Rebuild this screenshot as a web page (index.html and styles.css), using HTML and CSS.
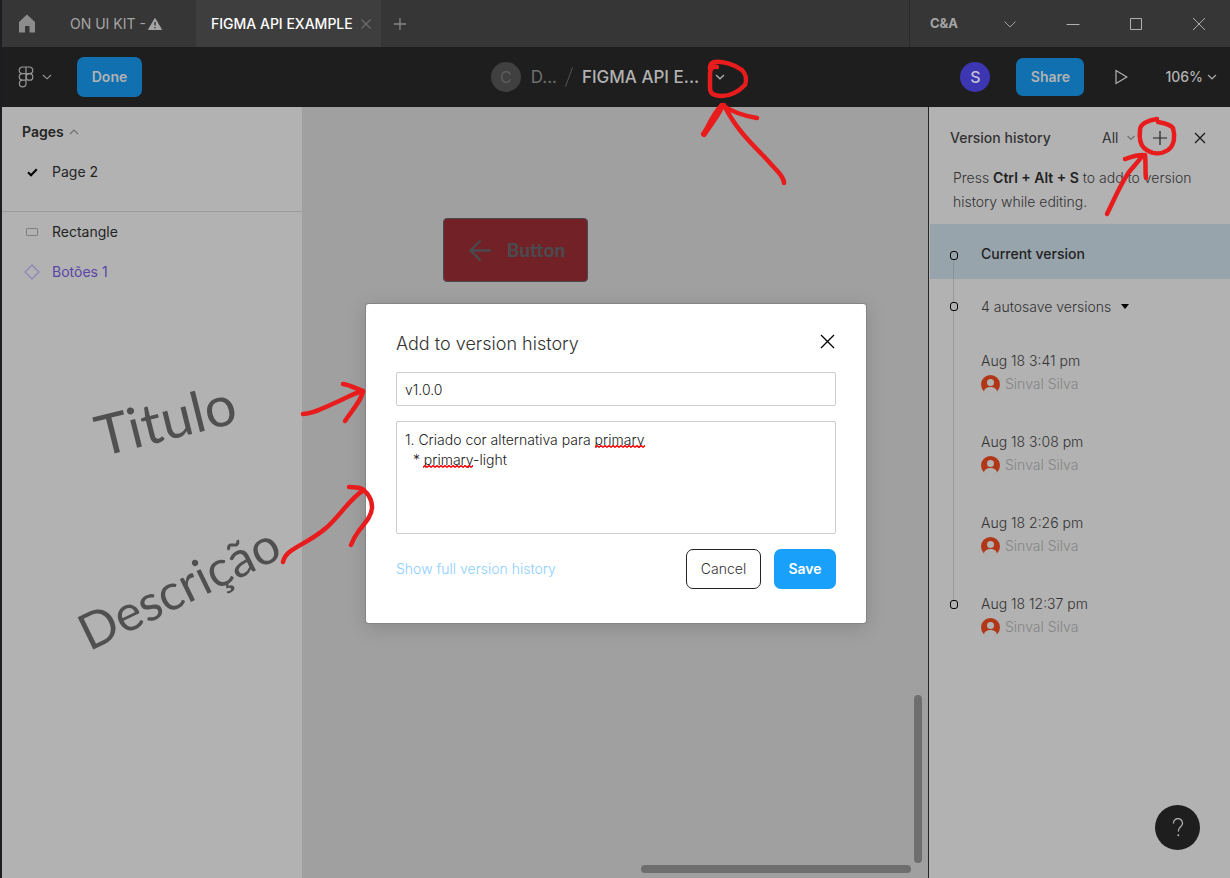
FILE: index.html
```html
<!DOCTYPE html>
<html lang="en">
<head>
<meta charset="utf-8">
<title>FIGMA API EXAMPLE</title>
<link rel="stylesheet" href="styles.css">
</head>
<body>
<div class="app">
  <header class="titlebar">
    <button class="home" aria-label="Home"><svg width="18" height="19" viewBox="0 0 18 19"><path d="M9 0.500 17 8v10.500h-5.500V12h-4.500v6.500H1V8z" fill="#8c8c8c"/></svg></button>
    <button class="tab">ON UI KIT - <svg width="14" height="12" viewBox="0 0 14 12"><path d="M7 0.500 13.500 11.500H0.500z" fill="#a5a5a5" stroke="#a5a5a5" stroke-linejoin="round"/><path d="M7 4v3.500M7 9v1.300" stroke="#363636" stroke-width="1.400"/></svg></button>
    <div class="tab-active"><button class="tab-label">FIGMA API EXAMPLE</button><button class="tab-close" aria-label="Close tab"><svg width="10" height="10" viewBox="0 0 10 10"><path d="M0.500 0.500l9 9M9.500 0.500l-9 9" stroke="#6c6c6c" stroke-width="1.200"/></svg></button></div>
    <button class="tab-add" aria-label="New tab"><svg width="12" height="12" viewBox="0 0 12 12"><path d="M6 0v12M0 6h12" stroke="#858585" stroke-width="1.300"/></svg></button>
    <div class="window-bar">
      <span class="org">C&amp;A</span>
      <button aria-label="Organization menu"><svg width="14" height="14" viewBox="0 0 14 14"><path d="M1.500 4.500 7 10l5.500-5.500" fill="none" stroke="#a0a0a0"/></svg></button>
      <button aria-label="Minimize"><svg width="14" height="14" viewBox="0 0 14 14"><path d="M0.500 7.500h13" stroke="#b0b0b0"/></svg></button>
      <button aria-label="Maximize"><svg width="14" height="14" viewBox="0 0 14 14"><path d="M1.500 1.500h11v11h-11z" fill="none" stroke="#b0b0b0"/></svg></button>
      <button aria-label="Close"><svg width="14" height="14" viewBox="0 0 14 14"><path d="M1 1l12 12M13 1 1 13" stroke="#b0b0b0"/></svg></button>
    </div>
  </header>

  <div class="toolbar">
    <div class="tools-left">
      <button class="menu" aria-label="Main menu">
        <svg width="16" height="22" viewBox="0 0 16 22"><g fill="none" stroke="#989898" stroke-width="1.200"><path d="M8 1H4.500a3.300 3.300 0 0 0 0 6.600H8zM8 1h3.500a3.300 3.300 0 0 1 0 6.600H8zM8 7.600H4.500a3.300 3.300 0 0 0 0 6.600H8zM8 14.200H4.500A3.300 3.300 0 1 0 8 17.500z"/><circle cx="11.500" cy="10.900" r="3.300"/></g></svg>
        <svg width="10" height="6" viewBox="0 0 10 6"><path d="M1 1l4 3.800L9 1" fill="none" stroke="#989898" stroke-width="1.100"/></svg>
      </button>
      <button class="blue done">Done</button>
    </div>
    <div class="crumbs">
      <span class="avatar team">C</span>
      <button class="project">D...</button>
      <svg class="slash" width="8" height="20" viewBox="0 0 8 20"><path d="M7.500 0.500.5 19.500" stroke="#555"/></svg>
      <button class="file-name">FIGMA API E...</button>
      <button class="file-menu" aria-label="File menu"><svg width="10" height="6" viewBox="0 0 10 6"><path d="M1 1l4 3.800L9 1" fill="none" stroke="#b2b2b2" stroke-width="1.200"/></svg></button>
    </div>
    <div class="tools-right">
      <span class="avatar user">S</span>
      <button class="blue share">Share</button>
      <button class="play" aria-label="Present"><svg width="13" height="16" viewBox="0 0 13 16"><path d="M1 1.500v13L11.800 8z" fill="none" stroke="#b2b2b2" stroke-width="1.200"/></svg></button>
      <button class="zoom">106% <svg width="10" height="6" viewBox="0 0 10 6"><path d="M1 1l4 3.800L9 1" fill="none" stroke="#a5a5a5" stroke-width="1.200"/></svg></button>
    </div>
  </div>

  <main class="workspace">
    <aside class="layers">
      <section class="pages">
        <button class="pages-head">Pages <svg width="10" height="6" viewBox="0 0 10 6"><path d="M1 5l4-4 4 4" fill="none" stroke="#707070" stroke-width="1.200"/></svg></button>
        <button class="row"><span class="row-icon"><svg width="11" height="9" viewBox="0 0 11 9"><path d="M1 4.300 4 7.300 9.800 1.200" fill="none" stroke="#000" stroke-width="2"/></svg></span>Page 2</button>
      </section>
      <button class="row"><span class="row-icon"><svg width="12" height="8" viewBox="0 0 12 8"><path d="M.5.5h11v7H.5z" fill="none" stroke="#808080"/></svg></span>Rectangle</button>
      <button class="row component"><span class="row-icon"><svg width="16" height="16" viewBox="0 0 16 16"><path d="M8 1l7 7-7 7-7-7z" fill="none" stroke="#8c7fb8" stroke-width="1.100"/></svg></span>Botões 1</button>
    </aside>

    <section class="canvas">
      <button class="sample"><svg width="23" height="23" viewBox="0 0 23 23"><path d="M11.500 1.500 1.500 11.500l10 10M1.500 11.500H22" fill="none" stroke="#4a4a4e" stroke-width="2.400"/></svg>Button</button>
      <div class="scroll-y"></div>
      <div class="scroll-x"></div>
    </section>

    <aside class="history">
      <header class="history-head">
        <h2>Version history</h2>
        <label class="filter"><select aria-label="Filter versions"><option>All</option></select><svg width="8" height="6" viewBox="0 0 8 6"><path d="M.5 1 4 4.500 7.500 1" fill="none" stroke="#707070" stroke-width="1.200"/></svg></label>
        <button class="add" aria-label="Add to version history"><svg width="14" height="14" viewBox="0 0 14 14"><path d="M7 0v14M0 7h14" stroke="#222" stroke-width="1.200"/></svg></button>
        <button class="close" aria-label="Close version history"><svg width="12" height="12" viewBox="0 0 12 12"><path d="M1 1l10 10M11 1 1 11" stroke="#151515" stroke-width="1.200"/></svg></button>
      </header>
      <p class="hint">Press <b>Ctrl + Alt + S</b> to add to version history while editing.</p>
      <ul class="versions">
        <li class="short dot current">Current version</li>
        <li class="short dot">4 autosave versions <svg width="8" height="5" viewBox="0 0 8 5"><path d="M0 0h8L4 5z"/></svg></li>
        <li class="entry"><span>Aug 18 3:41 pm</span><span class="author"><svg class="face" viewBox="0 0 19 19"><use href="#face"/></svg>Sinval Silva</span></li>
        <li class="entry"><span>Aug 18 3:08 pm</span><span class="author"><svg class="face" viewBox="0 0 19 19"><use href="#face"/></svg>Sinval Silva</span></li>
        <li class="entry"><span>Aug 18 2:26 pm</span><span class="author"><svg class="face" viewBox="0 0 19 19"><use href="#face"/></svg>Sinval Silva</span></li>
        <li class="entry dot last"><span>Aug 18 12:37 pm</span><span class="author"><svg class="face" viewBox="0 0 19 19"><use href="#face"/></svg>Sinval Silva</span></li>
      </ul>
      <button class="help" aria-label="Help"><svg width="12" height="19" viewBox="0 0 12 19"><path d="M1.500 5.500A4.500 4.500 0 1 1 8.800 8.600C7 10 6.300 11 6.300 13.500" fill="none" stroke="#b2b2b2" stroke-width="1.300"/><circle cx="6.300" cy="17.300" r="1" fill="#b2b2b2"/></svg></button>
    </aside>
  </main>
</div>

<div class="overlay">
  <form class="dialog" role="dialog" aria-labelledby="dialog-title">
    <div class="dialog-head">
      <h1 id="dialog-title">Add to version history</h1>
      <button type="button" aria-label="Close"><svg width="15" height="15" viewBox="0 0 15 15"><path d="M1 1l13 13M14 1 1 14" stroke="#000" stroke-width="1.300"/></svg></button>
    </div>
    <input class="field" type="text" aria-label="Title" value="v1.0.0">
    <div class="notes">
      <textarea class="field" aria-label="Description" spellcheck="false">1. Criado cor alternativa para primary
  * primary-light</textarea>
      <svg class="squiggle first" width="50" height="3"><rect width="50" height="3" fill="url(#wave)"/></svg>
      <svg class="squiggle second" width="50" height="3"><rect width="50" height="3" fill="url(#wave)"/></svg>
    </div>
    <div class="dialog-foot">
      <a href="#">Show full version history</a>
      <button type="button" class="cancel">Cancel</button>
      <button type="submit" class="save">Save</button>
    </div>
  </form>
</div>

<div class="ink">
  <svg width="1230" height="878" viewBox="0 0 1230 878">
    <defs>
      <pattern id="wave" width="4" height="3" patternUnits="userSpaceOnUse"><path d="M-1 3 2 .6 5 3" fill="none" stroke="#f01010" stroke-width="1.500"/></pattern>
      <g id="face"><circle cx="9.500" cy="9.500" r="9.500" fill="#b03717"/><circle cx="9.500" cy="7.500" r="3.500" fill="#b2b2b2"/><path d="M2.800 16.500C4 13 6.500 12 9.500 12s5.500 1 6.700 4.500a9.500 9.500 0 0 1-13.400 0z" fill="#b2b2b2"/></g>
    </defs>
    <g fill="none" stroke="#e81c1c" stroke-width="4.500" stroke-linecap="round" stroke-linejoin="round">
      <path d="M717 67c-5-1-7 2-7 7v14c0 6 4 8 12 8 9 0 18-6 23-11 2-5 1-11-3-15-8-6-20-9-27-8-5 1-5 4-5 7"/>
      <path d="M784 183c0-7-9-14-14-20-10-12-32-29-46-58M704 134c4-8 10-22 18-29 10 7 23 11 35 13"/>
      <path d="M704 134c5-8 12-16 18-28" stroke-width="6"/>
      <path d="M1157 119c-9 1-17 5-17 11-1 9 0 14 4 18 6 5 15 8 24 2 7-5 7-15 5-22-3-4-10-5-15-6"/>
      <path d="M1107 214c8-16 13-29 22-42 4-5 9-10 14-17-7 0-12 2-18 4M1145 155c1 8 0 16 1 23"/>
      <path d="M303 414c9 0 18-5 34-12 9-4 17-9 26-11-6-2-13-6-20-7M363 391c-1 8-9 17-18 30"/>
      <path d="M283 562c3-14 22-16 43-34 14-12 24-30 38-38-5-3-10-3-15-3M360 488c7 3 12 11 12 19 0 10-9 18-14 25-3 4-5 8-7 13"/>
    </g>
  </svg>
  <span class="scrawl scrawl-title">Titulo</span>
  <span class="scrawl scrawl-desc">Descrição</span>
</div>
</body>
</html>
```
FILE: styles.css
```css
* { box-sizing: border-box; }
body {
  margin: 0;
  min-height: 100vh;
  position: relative;
  font: 300 14px/20px Inter, "Liberation Sans", sans-serif;
  color: #333;
  background: #b2b2b2;
}
button, input, textarea, select { font: inherit; color: inherit; }
button { border: 0; padding: 0; background: none; }
svg { flex: none; }
h1, h2, p, ul { margin: 0; padding: 0; }
.app { display: flex; flex-direction: column; min-height: 100vh; border-left: 2px solid #1c1c22; }

.titlebar { display: flex; align-items: stretch; height: 47px; background: #363636; color: #a5a5a5; font-weight: 400; }
.titlebar button { display: flex; align-items: center; }
.home { padding: 0 0 0 16px; width: 50px; }
.titlebar .tab { width: 144px; padding-left: 18px; gap: 2px; font-weight: 400; }
.tab-active { display: flex; gap: 8px; padding: 0 10px 0 15px; background: #3e3e3e; }
.tab-label { color: #fff; font-weight: 500; }
.titlebar .tab-add { padding-left: 13px; }
.window-bar { display: flex; align-items: stretch; margin-left: auto; border-left: 1px solid #2a2a2a; }
.org { width: 68px; padding-left: 20px; font-weight: 700; font-size: 13px; line-height: 47px; }
.window-bar button { width: 63px; justify-content: center; }

.toolbar { display: grid; grid-template-columns: 1fr auto 1fr; align-items: center; height: 60px; background: #1e1e1e; color: #b2b2b2; }
.tools-left, .tools-right, .crumbs, .menu, .zoom { display: flex; align-items: center; }
.menu { gap: 8px; padding: 0 25px 0 16px; }
.blue { background: #1170b0; color: #b2b2b2; border-radius: 7px; font-weight: 600; }
.done { width: 65px; height: 40px; }
.avatar { width: 30px; height: 30px; border-radius: 50%; text-align: center; line-height: 30px; font-size: 16px; font-weight: 400; }
.team { background: #404040; color: #5c5c5c; margin-right: 10px; }
.user { background: #3c36b2; color: #c4c4d8; font-weight: 500; margin-right: 26px; }
.project, .file-name { font-size: 17px; font-weight: 400; color: #707070; }
.slash { margin: 0 9px 0 8px; }
.file-name { color: #b2b2b2; font-weight: 500; }
.file-menu { display: flex; padding: 8px 16px; }
.tools-right { justify-content: flex-end; padding-right: 13px; }
.share { width: 68px; height: 38px; margin-right: 31px; }
.play { display: flex; margin-right: 37px; }
.zoom { gap: 4px; font-weight: 500; }

.workspace { flex: 1; display: grid; grid-template-columns: 300px 1fr 302px; }
.layers { background: #b2b2b2; }
.pages { border-bottom: 1px solid #999; padding: 5px 0 19px; }
.pages-head, .row { display: flex; align-items: center; width: 100%; height: 40px; color: #242424; }
.pages-head { padding-left: 20px; gap: 5px; font-weight: 600; }
.row { padding-left: 20px; font-weight: 400; }
.row-icon { display: flex; justify-content: center; width: 20px; margin-right: 10px; }
.component { color: #5a45a8; }

.canvas { position: relative; background: #a0a0a0; }
.sample { position: absolute; left: 141px; top: 111px; width: 145px; height: 64px; padding-left: 3px; display: flex; align-items: center; justify-content: center; gap: 15px; border: 1px solid #4a4a4e; border-radius: 4px; background: #722226; color: #4a4a4e; font: 900 19px/24px Lato, sans-serif; }
.scroll-y, .scroll-x { position: absolute; background: #6e6e6e; border-radius: 4px; }
.scroll-y { right: 6px; bottom: 15px; width: 8px; height: 168px; }
.scroll-x { right: 17px; bottom: 5px; width: 270px; height: 8px; }

.history { position: relative; background: #b2b2b2; border-left: 1px solid #262626; padding-left: 1px; }
.history-head { display: flex; align-items: center; height: 59px; padding: 2px 24px 0 20px; }
.history-head h2 { flex: 1; font-size: 14px; font-weight: 500; line-height: 20px; }
.history-head button { display: flex; }
.filter { display: flex; align-items: center; margin-right: 18px; }
.filter select { appearance: none; border: 0; background: none; width: 25px; padding: 0; font-weight: 400; }
.add { margin-right: 27px; }
.hint { padding: 0 30px 10px 23px; line-height: 24px; }
.hint b { font-weight: 600; color: #222; }
.versions { list-style: none; }
.versions li { position: relative; padding-left: 51px; }
.versions li::before { content: ""; position: absolute; left: 23px; top: 0; bottom: 0; width: 1px; background: #999; }
.versions .current::before { top: 30px; background: #87929a; }
.versions .last::before { bottom: auto; height: 27px; }
.dot::after { content: ""; position: absolute; left: 20px; top: 23px; width: 6px; height: 7px; border: 1px solid #000; border-radius: 3px; background: #b2b2b2; }
.versions .short { display: flex; align-items: center; gap: 10px; height: 55px; }
.versions .current { padding-top: 4px; background: #98a4ab; font-weight: 500; color: #222; }
.current::after { top: 27px; background: #98a4ab; }
.versions .entry { display: flex; flex-direction: column; height: 81px; padding-top: 15px; line-height: 24px; }
.author { display: flex; align-items: center; gap: 5px; line-height: 22px; color: #858585; }
.face { width: 19px; height: 19px; }
.help { position: absolute; right: 30px; bottom: 28px; width: 45px; height: 45px; border-radius: 50%; background: #1e1e1e; display: flex; align-items: center; justify-content: center; }

.overlay { position: absolute; inset: 49px 0 0 2px; display: flex; align-items: center; justify-content: center; }
.dialog { width: 500px; padding: 28px 30px 34px; background: #fff; border-radius: 3px; box-shadow: 0 0 0 1px #858585, 0 4px 20px rgba(0, 0, 0, .16); }
.dialog-head { display: flex; align-items: center; justify-content: space-between; height: 24px; margin-bottom: 16px; }
.dialog-head h1 { font-size: 18px; font-weight: 300; line-height: 24px; }
.dialog-head button { display: flex; padding: 0 1px 5px 0; }
.field { display: block; width: 100%; padding: 0 8px; border: 1px solid #ccc; border-radius: 2px; background: #fff; outline: 0; color: #222; }
input.field { height: 34px; margin-bottom: 15px; }
.notes { position: relative; margin-bottom: 15px; }
textarea.field { height: 113px; padding-top: 8px; resize: none; }
.squiggle { position: absolute; }
.first { left: 199px; top: 24px; }
.second { left: 27px; top: 44px; }
.dialog-foot { display: flex; align-items: center; }
.dialog-foot a { flex: 1; color: #8ccfff; text-decoration: none; }
.cancel, .save { height: 40px; border-radius: 7px; }
.cancel { width: 75px; border: 1px solid #222; margin-right: 13px; }
.save { width: 62px; background: #18a0fb; color: #fff; font-weight: 600; }

.ink { position: absolute; inset: 0; pointer-events: none; overflow: hidden; }
.ink svg { display: block; }
.scrawl { position: absolute; color: #505050; font-family: Lato, sans-serif; font-weight: 400; line-height: 1; white-space: nowrap; }
.scrawl-title { left: 94px; top: 391px; font-size: 56px; transform: rotate(-14deg); }
.scrawl-desc { left: 70px; top: 562px; font-size: 50px; transform: rotate(-26deg); }
```
